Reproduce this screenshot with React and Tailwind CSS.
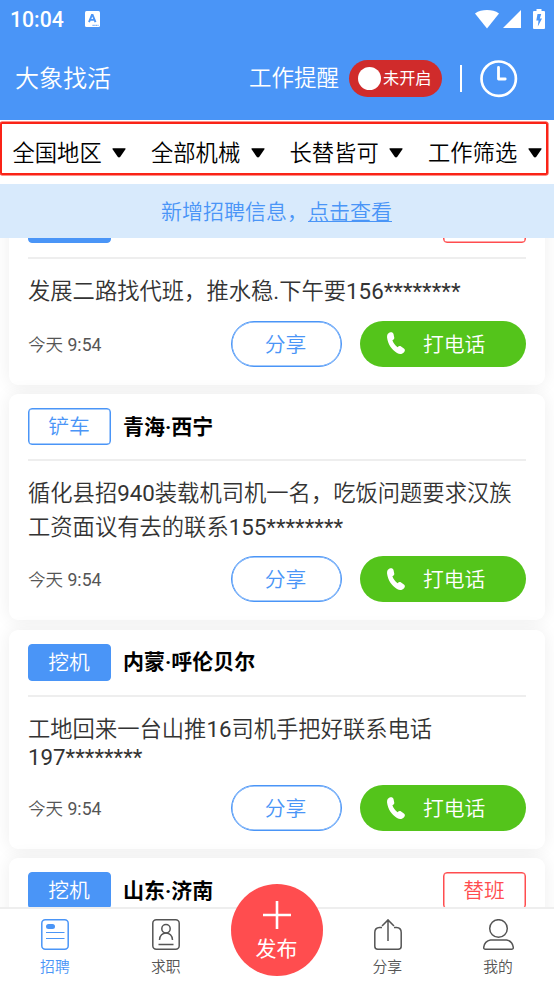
import React from "react";
import clsx from "clsx";

const filters = ["全国地区", "全部机械", "长替皆可", "工作筛选"];

const jobs = [
  {
    type: "挖机",
    filled: true,
    place: "",
    shift: "替班",
    lines: ["发展二路找代班，推水稳.下午要156********"],
    time: "今天 9:54",
  },
  {
    type: "铲车",
    filled: false,
    place: "青海·西宁",
    lines: [
      "循化县招940装载机司机一名，吃饭问题要求汉族",
      "工资面议有去的联系155********",
    ],
    time: "今天 9:54",
  },
  {
    type: "挖机",
    filled: true,
    place: "内蒙·呼伦贝尔",
    lines: ["工地回来一台山推16司机手把好联系电话", "197********"],
    time: "今天 9:54",
  },
  {
    type: "挖机",
    filled: true,
    place: "山东·济南",
    shift: "替班",
    lines: [],
    time: "今天 9:54",
  },
];

// digits are a bit heavier than the chinese text around them
const MixedText = ({ text }) =>
  text.split(/([\d:*.]+)/).map((part, i) =>
    i % 2 ? (
      <span key={i} className="font-normal">
        {part}
      </span>
    ) : (
      part
    )
  );

const StatusBar = () => (
  <div className="flex h-[38px] items-center pl-[10px] pr-[9px]">
    <span className="w-[55px] pt-px text-[21.200px] leading-[38px] font-medium">10:04</span>
    <svg className="ml-[20px]" width="15" height="16" viewBox="0 0 15 16">
      <rect width="15" height="16" rx="1.5" fill="#fff" />
      <path
        d="M4 11.2 6.900 3.900h.7l2.900 7.300M5.200 8.900h4.300"
        fill="none"
        stroke="#4A95F7"
        strokeWidth="1.9"
      />
      <path d="M7.500 14.300h6" stroke="#4A95F7" strokeWidth="1" strokeDasharray="1.300 .5" />
    </svg>
    <div className="ml-auto flex items-center">
      <svg width="24" height="19" viewBox="0 0 24 19">
        <path d="M0 3.600C3.500.8 7.500 0 12 0s8.500.8 12 3.600L12 18.500z" fill="#fff" />
      </svg>
      <svg className="ml-[4px]" width="18" height="18" viewBox="0 0 18 18">
        <path d="M18 0v18H0z" fill="#fff" />
      </svg>
      <svg className="ml-[12px]" width="12" height="20" viewBox="0 0 12 20">
        <path
          d="M3.500 0h5v2H11a1 1 0 0 1 1 1v16a1 1 0 0 1-1 1H1a1 1 0 0 1-1-1V3a1 1 0 0 1 1-1h2.500z"
          fill="#fff"
        />
        <path d="M4.500 5 3.300 11.500h2.200L4.800 17.500 9 9.500H6.800L8.200 5z" fill="#4A95F7" />
      </svg>
    </div>
  </div>
);

const Header = () => (
  <header className="h-[120px] bg-[#4a95f7] text-white">
    <StatusBar />
    <div className="flex h-[81px] items-center pl-[15px] pr-[36px]">
      <h1 className="pt-px text-[24px] font-[350]">大象找活</h1>
      <span className="ml-auto pt-px text-[22.500px] font-[350]">工作提醒</span>
      <div className="ml-[10px] flex h-[37px] w-[93px] items-center rounded-full bg-[#d02b2b] pl-[9px]">
        <span className="size-[23px] rounded-full bg-white" />
        <span className="ml-[2px] pt-px text-[16.200px] font-normal">未开启</span>
      </div>
      <span className="ml-[18px] h-[27px] w-[2px] bg-white" />
      <svg className="ml-[18px]" width="38" height="38" viewBox="0 0 38 38" fill="none" stroke="#fff">
        <circle cx="18.700" cy="18.700" r="17.200" strokeWidth="2.700" />
        <path d="M18.500 7.500v11.500h6.700" strokeWidth="2.800" strokeLinecap="round" strokeLinejoin="round" />
      </svg>
    </div>
  </header>
);

const FilterBar = () => (
  <div className="relative grid h-[64px] grid-cols-[138.500px_138.500px_138.500px_138.500px] items-center bg-white pt-px">
    {filters.map((name) => (
      <div key={name} className="flex items-center pl-[12.500px]">
        <span className="pt-[2px] text-[22.300px] font-[350] text-black">{name}</span>
        <svg className="ml-[10.500px] shrink-0" width="14" height="10" viewBox="0 0 14 10">
          <path
            d="M1 .2h12q1 0 .6.900L8.300 8.800Q7 10.100 5.700 8.800L.4 1.100Q0 .2 1 .2z"
            fill="#000"
          />
        </svg>
      </div>
    ))}
    <div className="pointer-events-none absolute top-[2px] left-0 h-[53px] w-[548px] rounded-[2px] border-2 border-[#fa2317] shadow-[0_0_0_0.500px_#fa2317]" />
  </div>
);

const Notice = () => (
  <div className="flex h-[54px] items-center justify-center bg-[#d8eafc] pt-[3px] pr-px text-[21px] font-[350] text-[#4a95f7]">
    <span>新增招聘信息，</span>
    <span className="underline decoration-1 underline-offset-[2px]">点击查看</span>
  </div>
);

const PhoneIcon = () => (
  <svg width="18" height="23" viewBox="0 0 18 23">
    <path
      d="M2.600.6C4.300-.2 6 .3 6.500 2l.7 3.300c.3 1.400-.3 2.200-1.800 3 .9 2.700 2.700 5.200 5.200 7 1.200-1.400 2.300-1.500 3.500-.8l2.800 1.900c1.300 1 1.300 2.600.1 3.900-1.700 2-4.500 2.400-7 .6C4.500 17.400.9 12 .1 5.700-.2 3.200.8 1.400 2.600.6z"
      fill="#fff"
    />
  </svg>
);

const JobCard = ({ job }) => (
  <article className="shrink-0 rounded-[9px] bg-white px-[19px] pt-[14px] pb-[18px] shadow-[0_0_18px_rgba(0,0,0,0.07)]">
    <div className="flex h-[37px] items-center">
      <span
        className={clsx(
          "flex h-[37px] w-[83px] items-center justify-center rounded-[4px] border border-[#4a95f7] pt-[2px] pr-px text-[20.800px] font-[350] shadow-[inset_0_0_0_0.500px_#4a95f7]",
          job.filled ? "bg-[#4a95f7] text-white" : "text-[#4a95f7]"
        )}
      >
        {job.type}
      </span>
      <span className="ml-[12px] pt-[2px] text-[21px] font-bold text-black">{job.place}</span>
      {job.shift && (
        <span className="ml-auto flex h-[37px] w-[83px] items-center justify-center rounded-[4px] border border-[#ff4d4f] pt-[2px] pr-px text-[20.800px] font-[350] text-[#ff4d4f] shadow-[inset_0_0_0_0.500px_#ff4d4f]">
          {job.shift}
        </span>
      )}
    </div>
    <div className="mt-[14px] h-[2px] bg-[#eeeeee]" />
    <div className="pt-[15px] text-[22.300px] font-[350] whitespace-nowrap text-[#333]">
      {job.lines.map((line) => (
        <p
          key={line}
          className={clsx(/^[\d*]+$/.test(line) ? "h-[27px] leading-[25px]" : "h-[33.500px] leading-[34px]")}
        >
          <MixedText text={line} />
        </p>
      ))}
    </div>
    <div className="mt-[13px] flex h-[46px] items-center">
      <span className="pt-[2px] text-[17.600px] font-[350] text-[#555]">
        <MixedText text={job.time} />
      </span>
      <button className="ml-auto h-[46px] w-[111px] rounded-full border border-[#4a95f7] pt-[3px] pr-[2px] text-[20.800px] font-[350] text-[#4a95f7] shadow-[inset_0_0_0_0.500px_#4a95f7]">
        分享
      </button>
      <button className="ml-[18px] flex h-[46px] w-[166px] items-center rounded-full bg-[#54c41b] pl-[27px] text-[20.800px] font-[350] text-white">
        <PhoneIcon />
        <span className="ml-[18px] pt-[3px]">打电话</span>
      </button>
    </div>
  </article>
);

const RecruitIcon = () => (
  <svg width="28" height="31" viewBox="0 0 28 31" fill="none" stroke="currentColor">
    <rect x=".8" y=".8" width="26.400" height="29.400" rx="3.500" strokeWidth="1.500" />
    <rect x="5" y="5" width="9" height="5" rx="2.500" fill="currentColor" stroke="none" />
    <path d="M5 13.500h18.500M5 19.500h18.500" strokeWidth="1.100" />
  </svg>
);

const ResumeIcon = () => (
  <svg width="28" height="31" viewBox="0 0 28 31" fill="none" stroke="currentColor" strokeWidth="1.500">
    <rect x=".8" y=".8" width="26.400" height="29.400" rx="3.500" />
    <circle cx="14" cy="9.800" r="4.200" />
    <path d="M7.500 21c0-9.300 13-9.300 13 0M6.500 25.500h15" />
  </svg>
);

const ShareIcon = () => (
  <svg width="28" height="31" viewBox="0 0 28 31" fill="none" stroke="currentColor" strokeWidth="1.500">
    <path d="M8 8.500H5.500Q.8 8.800.8 13.500v13.700q0 3 3 3h20.400q3 0 3-3V13.500q0-4.700-4.700-5H20M14 22V1M8 7 14 .9 20 7" />
  </svg>
);

const MineIcon = () => (
  <svg width="31" height="31" viewBox="0 0 31 31" fill="none" stroke="currentColor" strokeWidth="1.500">
    <circle cx="15.500" cy="9.500" r="8.800" />
    <path d="M7.500 21h16q6 1 6.800 7.500.100 1.700-1.800 1.700h-26q-1.900 0-1.800-1.700Q1.500 22 7.500 21z" />
  </svg>
);

const NavItem = ({ icon, label, active }) => (
  <div
    className={clsx(
      "flex flex-1 flex-col items-center pt-[10px] text-[14.800px] font-[350]",
      active ? "text-[#4a95f7]" : "text-[#555]"
    )}
  >
    {icon}
    <span className="mt-[5px] pr-px leading-[24px]">{label}</span>
  </div>
);

const BottomNav = () => (
  <nav className="relative flex h-[77px] shrink-0 border-t-2 border-[#eeeeee] bg-white">
    <NavItem icon={<RecruitIcon />} label="招聘" active />
    <NavItem icon={<ResumeIcon />} label="求职" />
    <div className="flex-1" />
    <NavItem icon={<ShareIcon />} label="分享" />
    <NavItem icon={<MineIcon />} label="我的" />
    {/* raised publish button */}
    <button className="absolute top-[-25px] left-[231px] flex size-[92px] flex-col items-center rounded-full bg-[#ff4d4f] pt-[17px] text-white">
      <svg width="28" height="28" viewBox="0 0 28 28" stroke="#fff" strokeWidth="2.600">
        <path d="M14 0v28M0 14h28" />
      </svg>
      <span className="mt-[6px] pr-px text-[21px] leading-[28px]">发布</span>
    </button>
  </nav>
);

export default function App() {
  return (
    <div className="flex h-[984px] w-[554px] flex-col overflow-hidden bg-white font-['Roboto','Noto_Sans_CJK_SC',sans-serif]">
      <Header />
      <FilterBar />
      <Notice />
      <main className="flex min-h-0 flex-1 flex-col overflow-hidden">
        <div className="mt-[-45.700px] flex flex-col gap-[9.400px] px-[9px]">
          {jobs.map((job, i) => (
            <JobCard key={i} job={job} />
          ))}
        </div>
      </main>
      <BottomNav />
    </div>
  );
}
